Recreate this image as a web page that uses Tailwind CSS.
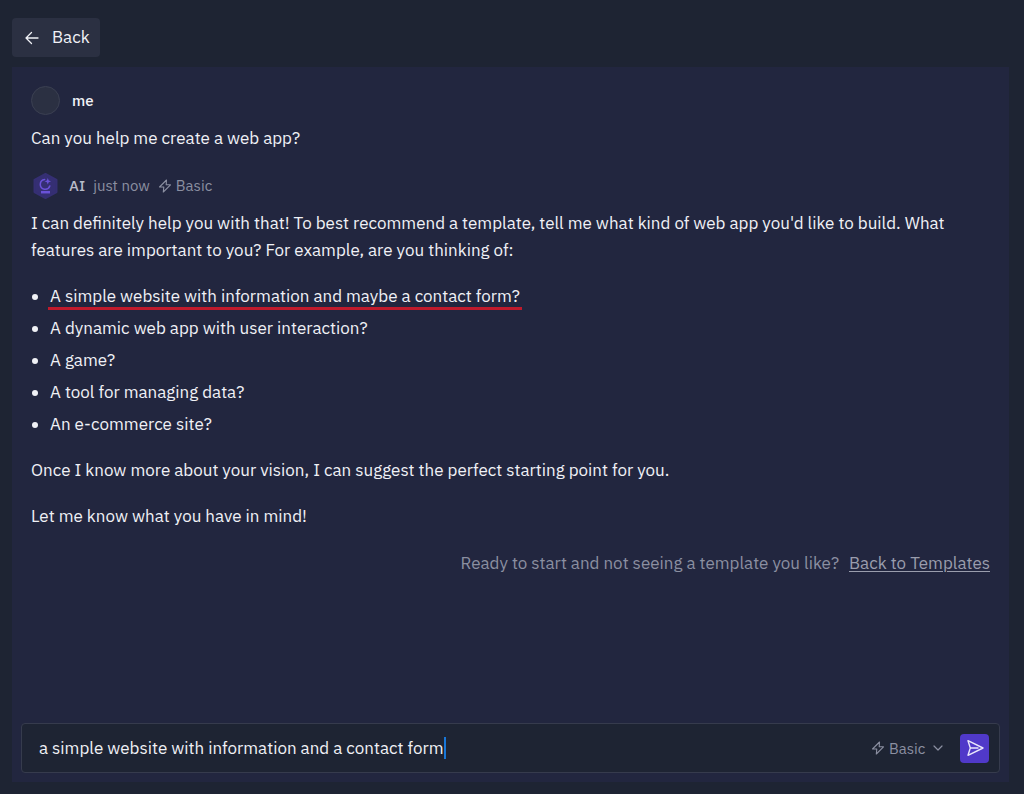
<!DOCTYPE html>
<html lang="en">
<head>
  <meta charset="UTF-8" />
  <meta name="viewport" content="width=device-width, initial-scale=1.0"/>
  <title>AI Chat</title>
  <script src="https://cdn.jsdelivr.net/npm/@tailwindcss/browser@4"></script>
</head>
<body class="min-h-screen flex flex-col bg-[#1e2433] pt-[18px] pb-3 pl-3 pr-[15px] font-['IBM_Plex_Sans',Roboto,sans-serif] text-[17px] leading-[27px] text-[#f0f1f6]">

  <header class="mb-2.5">
    <button type="button" class="flex h-[39px] items-center gap-3 rounded-[4px] bg-[#2b3042] pl-3 pr-2.5">
      <svg class="size-4" viewBox="0 0 16 16" fill="none" stroke="currentColor" stroke-width="1.3" stroke-linecap="round" stroke-linejoin="round">
        <path d="M14 8H2M7.5 2.5L2 8l5.5 5.5"/>
      </svg>
      Back
    </button>
  </header>

  <main class="flex flex-1 flex-col bg-[#22263f] px-[9px] pt-[19px] pb-[9px]">
    <div class="flex-1 px-2.5">

      <!-- User message -->
      <section>
        <div class="flex h-[29px] items-center gap-3">
          <span class="size-[29px] rounded-full border border-[#3b4052] bg-[#2b3042]"></span>
          <span class="text-[15px] font-medium">me</span>
        </div>
        <p class="mt-2.5">Can you help me create a web app?</p>
      </section>

      <!-- AI answer -->
      <section class="mt-[19px]">
        <div class="flex h-[29px] items-center text-[15px] text-[#8b8fa1]">
          <svg class="h-[28px] w-[29px]" viewBox="0 0 29 28" fill="none">
            <path d="M14.5 2L25.500 8v12l-11 6L3.500 20V8z" fill="#352f73" stroke="#352f73" stroke-width="2" stroke-linejoin="round"/>
            <path d="M13.600 7.500a4.900 4.900 0 1 0 5.200 6.500" stroke="#6a52d8" stroke-width="1.500" stroke-linecap="round"/>
            <path d="M16.800 6l.9 2.400 2.400.9-2.400.9-.9 2.400-.9-2.400-2.400-.9 2.400-.9z" fill="#6a52d8"/>
            <path d="M10 20.200h9" stroke="#6a52d8" stroke-width="2.500"/>
          </svg>
          <span class="ml-[9px] font-medium text-[#b9bcc9]">AI</span>
          <span class="ml-2">just now</span>
          <svg class="ml-2 size-3.5" viewBox="0 0 14 14" fill="none" stroke="currentColor" stroke-width="1.100" stroke-linejoin="round">
            <path d="M8.500 1L1.500 8h4.300L5.300 13l7.200-7.200H8.200z"/>
          </svg>
          <span class="ml-1">Basic</span>
        </div>
        <p class="mt-2.5">I can definitely help you with that! To best recommend a template, tell me what kind of web app you'd like to build. What features are important to you? For example, are you thinking of:</p>
        <ul class="mt-[19px] list-disc space-y-[5px] pl-[19px]">
          <li><span class="relative">A simple website with information and maybe a contact form?<span class="absolute -inset-x-0.5 -bottom-[3px] h-[3px] bg-[#c01a2c]"></span></span></li>
          <li>A dynamic web app with user interaction?</li>
          <li>A game?</li>
          <li>A tool for managing data?</li>
          <li>An e-commerce site?</li>
        </ul>
        <p class="mt-[19px]">Once I know more about your vision, I can suggest the perfect starting point for you.</p>
        <p class="mt-[19px]">Let me know what you have in mind!</p>
      </section>

      <p class="mt-5 flex justify-end gap-2.5 text-[#8b8fa1]">
        Ready to start and not seeing a template you like?
        <a href="#" class="text-[#9a9dad] underline underline-offset-2">Back to Templates</a>
      </p>
    </div>

    <!-- Composer -->
    <form class="flex h-[50px] items-center rounded-[4px] border border-[#363b4d] bg-[#1e2433] pl-[17px] pr-2.5">
      <input type="text" aria-label="Message" value="a simple website with information and a contact form" class="h-[27px] field-sizing-content max-w-full outline-none">
      <span class="h-[22px] w-0.5 bg-[#1877d8]"></span>
      <div class="ml-auto flex items-center text-[15px] text-[#8b8fa1]">
        <svg class="size-3.5" viewBox="0 0 14 14" fill="none" stroke="currentColor" stroke-width="1.100" stroke-linejoin="round">
          <path d="M8.500 1L1.500 8h4.300L5.300 13l7.200-7.200H8.200z"/>
        </svg>
        <select aria-label="Mode" class="ml-1 h-[27px] appearance-none outline-none">
          <option>Basic</option>
        </select>
        <svg class="ml-[7px] size-2.5" viewBox="0 0 10 10" fill="none" stroke="currentColor" stroke-width="1.200" stroke-linecap="round" stroke-linejoin="round">
          <path d="M1 3l4 4 4-4"/>
        </svg>
      </div>
      <button type="submit" aria-label="Send" class="ml-[17px] flex size-[29px] items-center justify-center rounded-[4px] bg-[#5039c9]">
        <svg class="size-[18px]" viewBox="0 0 18 18" fill="none" stroke="#e9e6fb" stroke-width="1.400" stroke-linejoin="round" stroke-linecap="round">
          <path d="M2 1.700L17 9 2 16.300 4.300 9zM4.300 9H12"/>
        </svg>
      </button>
    </form>
  </main>

</body>
</html>
